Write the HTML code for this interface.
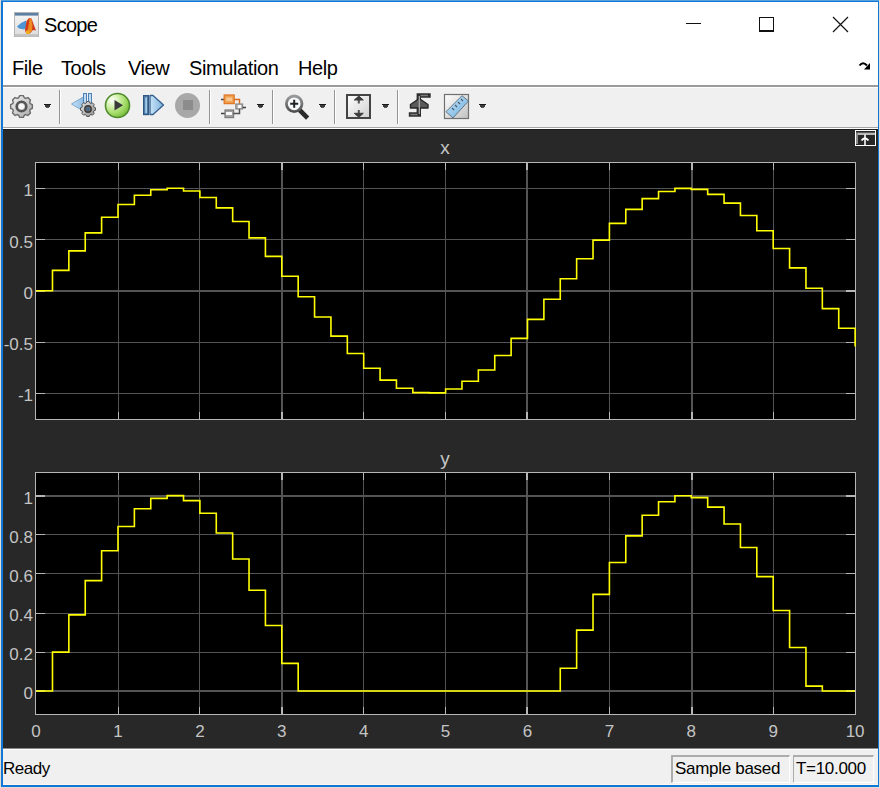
<!DOCTYPE html>
<html><head><meta charset="utf-8">
<style>
*{margin:0;padding:0;box-sizing:border-box}
html,body{width:880px;height:788px;overflow:hidden;background:#e4ddd6}
body{position:relative;font-family:"Liberation Sans",sans-serif}
.abs{position:absolute}
#win{position:absolute;left:1px;top:0;width:878px;height:787px;background:#0f78d6}
#topl{position:absolute;left:1px;top:0;width:878px;height:1px;background:#56a0df}
#title{position:absolute;left:3px;top:2px;width:875px;height:83px;background:#fff}
#sep1{position:absolute;left:3px;top:85px;width:875px;height:2px;background:#9b9b9b}
#tb{position:absolute;left:3px;top:87px;width:875px;height:40px;background:#f0f0f0;border-top:1px solid #fff}
#tbl{position:absolute;left:3px;top:127px;width:875px;height:1px;background:#a5a5a5}
#tbw{position:absolute;left:3px;top:128px;width:875px;height:1px;background:#fff}
#plot{position:absolute;left:3px;top:129px;width:875px;height:619px;background:#282828;border-top:1px solid #1c1c1c}
#sbl{position:absolute;left:3px;top:748px;width:875px;height:1px;background:#8a8a8a}
#sb{position:absolute;left:3px;top:749px;width:875px;height:35px;background:#f0f0f0;border-top:1px solid #fff}
#sbc{position:absolute;left:3px;top:784px;width:875px;height:1px;background:#fdf8f3}
.menu{position:absolute;top:56.5px;font-size:20px;color:#000;letter-spacing:-0.4px}
.yl{position:absolute;left:0;width:33px;text-align:right;font-size:17px;color:#c4c4c4;line-height:18px}
.xl{position:absolute;top:723px;width:40px;text-align:center;font-size:17px;color:#c4c4c4;line-height:18px}
.ttl{position:absolute;left:425px;width:40px;text-align:center;font-size:19px;color:#c4c4c4;line-height:20px}
.sbox{position:absolute;top:755px;height:28px;padding-top:1px;border-top:2px solid #acacac;border-left:2px solid #acacac;border-right:1px solid #fff;border-bottom:1px solid #fff;font-size:17px;line-height:22px;color:#000;padding-left:2px;white-space:nowrap;letter-spacing:-0.3px}
.sep{position:absolute;top:90px;width:1px;height:34px;background:#949494;box-shadow:1px 0 0 #fff}
.dd{position:absolute;top:104px;width:7px;height:4px}
</style></head><body>
<div id="win"></div>
<div id="topl"></div>
<div id="title"></div>
<div id="sep1"></div>
<div id="tb"></div>
<div id="tbl"></div>
<div id="tbw"></div>
<div id="plot"></div>
<div id="sbl"></div>
<div id="sb"></div>
<div id="sbc"></div>

<!-- title bar -->
<svg class="abs" style="left:14px;top:12px" width="26" height="26" viewBox="0 0 26 26">
<defs><linearGradient id="ig" x1="0" y1="0" x2="0" y2="1"><stop offset="0" stop-color="#f6f6f6"/><stop offset="1" stop-color="#dcdcdc"/></linearGradient></defs>
<rect x="0.5" y="0.5" width="24" height="24" fill="url(#ig)" stroke="#b4b4b4"/>
<rect x="1" y="1" width="23" height="2.6" fill="#5c80a4"/>
<rect x="1" y="22" width="23" height="2.5" fill="#c4c4c4"/>
<path d="M3,14.5 L7,11 L12,8.5 L13,15 L10,17.5 L5,16.5 Z" fill="#4d94d4"/>
<path d="M11,18 L12.5,9 L15,6 L17.5,6.5 L19.5,12 L21,16 L22,18.5 L19,18 L16.5,21 L13,22 L11.5,20 Z" fill="#cf3a1a"/>
<path d="M15.5,6.5 L17.5,7 L18.5,13 L18,19 L16,21 L13,21.5 L14.5,14 Z" fill="#ee8a20"/>
<path d="M12,18.5 L15.5,18.5 L15.5,22 L12,22 Z" fill="#f0b020"/>
</svg>
<div class="abs" style="left:44px;top:14px;font-size:20px;color:#000;letter-spacing:-0.7px">Scope</div>
<div class="abs" style="left:686px;top:23px;width:15px;height:1px;background:#111"></div>
<div class="abs" style="left:759px;top:17px;width:15px;height:15px;border:1px solid #111;border-bottom-width:2px"></div>
<svg class="abs" style="left:832px;top:16px" width="17" height="17" viewBox="0 0 17 17"><path d="M1,1 L16,16 M16,1 L1,16" stroke="#111" stroke-width="1.2"/></svg>

<!-- menu -->
<div class="menu" style="left:12px">File</div>
<div class="menu" style="left:61px">Tools</div>
<div class="menu" style="left:128px">View</div>
<div class="menu" style="left:189px">Simulation</div>
<div class="menu" style="left:298px">Help</div>
<svg class="abs" style="left:858px;top:61px" width="14" height="10" viewBox="0 0 14 10"><path d="M1.5,4.5 Q5,0 9,4.5" stroke="#000" stroke-width="2" fill="none"/><path d="M6,8.5 L12,8.5 L12,2 Z" fill="#000"/></svg>

<!-- toolbar -->
<div class="sep" style="left:59px"></div>
<div class="sep" style="left:209px"></div>
<div class="sep" style="left:272px"></div>
<div class="sep" style="left:334px"></div>
<div class="sep" style="left:397px"></div>
<svg class="dd" style="left:44px" width="7" height="4" viewBox="0 0 7 4"><rect x="0" y="0" width="7" height="1" fill="#1a1a1a"/><rect x="1" y="1" width="5" height="2" fill="#3a3a3a"/><rect x="2" y="3" width="3" height="1" fill="#555"/></svg>
<svg class="dd" style="left:257px" width="7" height="4" viewBox="0 0 7 4"><rect x="0" y="0" width="7" height="1" fill="#1a1a1a"/><rect x="1" y="1" width="5" height="2" fill="#3a3a3a"/><rect x="2" y="3" width="3" height="1" fill="#555"/></svg>
<svg class="dd" style="left:319px" width="7" height="4" viewBox="0 0 7 4"><rect x="0" y="0" width="7" height="1" fill="#1a1a1a"/><rect x="1" y="1" width="5" height="2" fill="#3a3a3a"/><rect x="2" y="3" width="3" height="1" fill="#555"/></svg>
<svg class="dd" style="left:382px" width="7" height="4" viewBox="0 0 7 4"><rect x="0" y="0" width="7" height="1" fill="#1a1a1a"/><rect x="1" y="1" width="5" height="2" fill="#3a3a3a"/><rect x="2" y="3" width="3" height="1" fill="#555"/></svg>
<svg class="dd" style="left:479px" width="7" height="4" viewBox="0 0 7 4"><rect x="0" y="0" width="7" height="1" fill="#1a1a1a"/><rect x="1" y="1" width="5" height="2" fill="#3a3a3a"/><rect x="2" y="3" width="3" height="1" fill="#555"/></svg>


<!-- gear -->
<svg class="abs" style="left:8px;top:93px" width="28" height="28" viewBox="0 0 28 28">
<defs><linearGradient id="gg" x1="0" y1="0" x2="1" y2="1"><stop offset="0" stop-color="#f4f4f4"/><stop offset="1" stop-color="#a8a8a8"/></linearGradient>
<linearGradient id="gg2" x1="0" y1="0" x2="1" y2="1"><stop offset="0" stop-color="#e8e8e8"/><stop offset="1" stop-color="#8a8a8a"/></linearGradient></defs>
<path d="M10.66,4.75 L11.69,2.65 L15.31,2.65 L16.34,4.75 L17.68,5.30 L19.90,4.55 L22.45,7.10 L21.70,9.32 L22.25,10.66 L24.35,11.69 L24.35,15.31 L22.25,16.34 L21.70,17.68 L22.45,19.90 L19.90,22.45 L17.68,21.70 L16.34,22.25 L15.31,24.35 L11.69,24.35 L10.66,22.25 L9.32,21.70 L7.10,22.45 L4.55,19.90 L5.30,17.68 L4.75,16.34 L2.65,15.31 L2.65,11.69 L4.75,10.66 L5.30,9.32 L4.55,7.10 L7.10,4.55 L9.32,5.30Z" fill="url(#gg)" stroke="#6a6a6a" stroke-width="1.4" stroke-linejoin="round"/>
<circle cx="13.5" cy="13.5" r="4.8" fill="none" stroke="#555" stroke-width="2.6"/>
<circle cx="13.5" cy="13.5" r="2.8" fill="#f8f8f8"/>
</svg>
<!-- step back -->
<svg class="abs" style="left:70px;top:92px" width="28" height="28" viewBox="0 0 28 28">
<defs><linearGradient id="tb1" x1="0" y1="0" x2="1" y2="0"><stop offset="0" stop-color="#c8e2f6"/><stop offset="1" stop-color="#8ab8e0"/></linearGradient></defs>
<path d="M1.5,12 L15,4 L15,20 Z" fill="url(#tb1)" stroke="#78a8d0" stroke-width="1"/>
<rect x="13.5" y="1.5" width="3" height="13" fill="#c0dcf2" stroke="#4f82b4" stroke-width="1"/>
<rect x="18.5" y="1.5" width="3" height="13" fill="#c0dcf2" stroke="#4f82b4" stroke-width="1"/>
<path d="M16.08,11.10 L16.75,9.50 L19.25,9.50 L19.92,11.10 L20.81,11.48 L22.42,10.82 L24.18,12.58 L23.52,14.19 L23.90,15.08 L25.50,15.75 L25.50,18.25 L23.90,18.92 L23.52,19.81 L24.18,21.42 L22.42,23.18 L20.81,22.52 L19.92,22.90 L19.25,24.50 L16.75,24.50 L16.08,22.90 L15.19,22.52 L13.58,23.18 L11.82,21.42 L12.48,19.81 L12.10,18.92 L10.50,18.25 L10.50,15.75 L12.10,15.08 L12.48,14.19 L11.82,12.58 L13.58,10.82 L15.19,11.48Z" fill="url(#gg2)" stroke="#555" stroke-width="1" stroke-linejoin="round"/>
<circle cx="18" cy="17" r="3.2" fill="#6a6a6a" stroke="#3a3a3a" stroke-width="1.4"/>
<circle cx="18" cy="17" r="1.5" fill="#3a6aa0"/>
</svg>
<!-- play -->
<svg class="abs" style="left:104px;top:92px" width="28" height="28" viewBox="0 0 28 28">
<defs><radialGradient id="pg" cx="0.28" cy="0.28" r="0.85"><stop offset="0" stop-color="#ffffff"/><stop offset="0.35" stop-color="#d0f0a8"/><stop offset="0.7" stop-color="#9cd860"/><stop offset="1" stop-color="#6cb030"/></radialGradient></defs>
<circle cx="13.5" cy="13.5" r="12" fill="url(#pg)" stroke="#4f8a2c" stroke-width="1.6"/>
<path d="M10.5,8 L10.5,18.5 L19,13.3 Z" fill="#3a3a3a"/>
</svg>
<!-- step fwd -->
<svg class="abs" style="left:141px;top:92px" width="26" height="26" viewBox="0 0 26 26">
<defs><linearGradient id="bg1" x1="0" y1="0" x2="1" y2="0"><stop offset="0" stop-color="#c8e4f8"/><stop offset="1" stop-color="#7eb0da"/></linearGradient></defs>
<rect x="2.6" y="3.6" width="4.8" height="19" fill="#5582b0" stroke="#2f5580" stroke-width="1.2"/>
<rect x="4.4" y="5.5" width="1.4" height="15.5" fill="#b8dcf4"/>
<path d="M9,3.5 L12,3.5 L22.5,13 L12,22.5 L9,22.5 Z" fill="url(#bg1)" stroke="#35608e" stroke-width="1.3" stroke-linejoin="round"/>
</svg>
<!-- stop -->
<svg class="abs" style="left:174px;top:92px" width="28" height="28" viewBox="0 0 28 28">
<circle cx="13.5" cy="13.5" r="12.5" fill="#a8a8a8"/>
<rect x="9" y="8" width="10" height="10" fill="#8c8c8c"/>
</svg>
<!-- signal select -->
<svg class="abs" style="left:219px;top:92px" width="30" height="28" viewBox="0 0 30 28">
<path d="M2,7.5 L5,7.5" stroke="#404040" stroke-width="1.5"/>
<rect x="5.2" y="3" width="10" height="8.6" fill="#f0a050" stroke="#e07828" stroke-width="1.3"/>
<rect x="7.2" y="5.5" width="6" height="3.5" fill="#f8c890"/>
<path d="M15.2,7.5 L20.5,7.5 L20.5,12" stroke="#d86a20" stroke-width="1.5" fill="none"/>
<rect x="16.8" y="12" width="6.8" height="5" fill="#b0b0b0" stroke="#8a8a8a" stroke-width="1.2"/>
<rect x="18.9" y="13" width="3.3" height="3" fill="#fafafa"/>
<path d="M23.6,15.5 L27,15.5" stroke="#404040" stroke-width="1.5"/>
<path d="M2,21.5 L6,21.5" stroke="#404040" stroke-width="1.5"/>
<rect x="6" y="18" width="8.6" height="7.6" fill="#a0a0a0" stroke="#7a7a7a" stroke-width="1.2"/>
<rect x="7" y="20" width="6" height="3" fill="#fafafa"/>
<path d="M14.6,21.5 L20.5,21.5 L20.5,17" stroke="#505050" stroke-width="1.5" fill="none"/>
</svg>
<!-- zoom -->
<svg class="abs" style="left:282px;top:93px" width="28" height="27" viewBox="0 0 28 27">
<defs><linearGradient id="zg" x1="0" y1="0" x2="0" y2="1"><stop offset="0" stop-color="#9a9a9a"/><stop offset="1" stop-color="#505050"/></linearGradient></defs>
<path d="M18,17.5 L24,23.5" stroke="#2a2a2a" stroke-width="4.6" stroke-linecap="square"/>
<circle cx="12.2" cy="10.8" r="7.8" fill="#f6f9fc" stroke="url(#zg)" stroke-width="2.8"/>
<path d="M8.2,10.8 L16.2,10.8 M12.2,6.8 L12.2,14.8" stroke="#222" stroke-width="2"/>
</svg>
<!-- scale -->
<svg class="abs" style="left:345px;top:93px" width="28" height="28" viewBox="0 0 28 28">
<defs><linearGradient id="sg" x1="0" y1="0" x2="1" y2="1"><stop offset="0" stop-color="#ffffff"/><stop offset="1" stop-color="#cfcfcf"/></linearGradient></defs>
<rect x="2" y="2" width="23" height="23" fill="url(#sg)" stroke="#444" stroke-width="2"/>
<path d="M13.8,5 L13.8,10.5 M13.8,17 L13.8,22" stroke="#505050" stroke-width="2"/>
<path d="M9.3,7 L13.8,3 L18.3,7 Z M9.3,20.3 L13.8,24.3 L18.3,20.3 Z" fill="#3c3c3c" stroke="#3c3c3c" stroke-width="1" stroke-linejoin="round"/>
</svg>
<!-- triggers -->
<svg class="abs" style="left:407px;top:92px" width="26" height="28" viewBox="0 0 26 28">
<path d="M4,22.5 L11.8,22.5 L11.8,3.5 L21.5,3.5" stroke="#2e2e2e" stroke-width="4.4" fill="none" stroke-linecap="square"/>
<path d="M3.5,22.5 L10.5,22.5 M13.5,3.5 L21,3.5" stroke="#7a7a7a" stroke-width="1.4" fill="none"/>
<path d="M3.5,16 L3.5,12.5 L12.2,6.5 L21,12.5 L21,16 Z" fill="#5a5a5a" stroke="#262626" stroke-width="1.4" stroke-linejoin="round"/>
<path d="M12.3,4 L12.3,22" stroke="#b0b0b0" stroke-width="1.2"/>
</svg>
<!-- measure -->
<svg class="abs" style="left:443px;top:93px" width="28" height="28" viewBox="0 0 28 28">
<defs><linearGradient id="mg" x1="0" y1="0" x2="1" y2="1"><stop offset="0" stop-color="#ffffff"/><stop offset="1" stop-color="#c0c0c0"/></linearGradient>
<linearGradient id="mb" x1="0" y1="0" x2="1" y2="1"><stop offset="0" stop-color="#c8e4f8"/><stop offset="1" stop-color="#6aaede"/></linearGradient></defs>
<rect x="1.5" y="1.5" width="24" height="24" fill="url(#mg)" stroke="#707070" stroke-width="1.2"/>
<path d="M3,18.7 L19,2.7 L25.5,8 L10,25 Z" fill="url(#mb)" stroke="#5a6a78" stroke-width="0.9"/>
<path d="M9,15 L11,17 M12,12 L14,14 M15,9 L17,11 M18,6 L20,8" stroke="#4a5a68" stroke-width="1.1"/>
</svg>

<!-- plot area -->
<svg class="abs" style="left:0;top:0" width="880" height="788" viewBox="0 0 880 788">
<rect x="35" y="162" width="821" height="258" fill="#000"/>
<rect x="118" y="163" width="1" height="256" fill="#545454"/>
<rect x="199" y="163" width="1" height="256" fill="#545454"/>
<rect x="281" y="163" width="2" height="256" fill="#545454"/>
<rect x="363" y="163" width="1" height="256" fill="#545454"/>
<rect x="445" y="163" width="1" height="256" fill="#545454"/>
<rect x="526" y="163" width="2" height="256" fill="#545454"/>
<rect x="609" y="163" width="1" height="256" fill="#545454"/>
<rect x="691" y="163" width="2" height="256" fill="#545454"/>
<rect x="773" y="163" width="1" height="256" fill="#545454"/>
<rect x="36" y="188" width="819" height="1" fill="#545454"/>
<rect x="36" y="239" width="819" height="1" fill="#545454"/>
<rect x="36" y="290" width="819" height="2" fill="#545454"/>
<rect x="36" y="342" width="819" height="1" fill="#545454"/>
<rect x="36" y="393" width="819" height="1" fill="#545454"/>
<rect x="118" y="412" width="1" height="7" fill="#b6b6b6"/>
<rect x="118" y="163" width="1" height="7" fill="#b6b6b6"/>
<rect x="199" y="412" width="1" height="7" fill="#b6b6b6"/>
<rect x="199" y="163" width="1" height="7" fill="#b6b6b6"/>
<rect x="281" y="412" width="2" height="7" fill="#b6b6b6"/>
<rect x="281" y="163" width="2" height="7" fill="#b6b6b6"/>
<rect x="363" y="412" width="1" height="7" fill="#b6b6b6"/>
<rect x="363" y="163" width="1" height="7" fill="#b6b6b6"/>
<rect x="445" y="412" width="1" height="7" fill="#b6b6b6"/>
<rect x="445" y="163" width="1" height="7" fill="#b6b6b6"/>
<rect x="526" y="412" width="2" height="7" fill="#b6b6b6"/>
<rect x="526" y="163" width="2" height="7" fill="#b6b6b6"/>
<rect x="609" y="412" width="1" height="7" fill="#b6b6b6"/>
<rect x="609" y="163" width="1" height="7" fill="#b6b6b6"/>
<rect x="691" y="412" width="2" height="7" fill="#b6b6b6"/>
<rect x="691" y="163" width="2" height="7" fill="#b6b6b6"/>
<rect x="773" y="412" width="1" height="7" fill="#b6b6b6"/>
<rect x="773" y="163" width="1" height="7" fill="#b6b6b6"/>
<rect x="36" y="188" width="9" height="1" fill="#b6b6b6"/>
<rect x="846" y="188" width="9" height="1" fill="#b6b6b6"/>
<rect x="36" y="239" width="9" height="1" fill="#b6b6b6"/>
<rect x="846" y="239" width="9" height="1" fill="#b6b6b6"/>
<rect x="36" y="290" width="9" height="2" fill="#b6b6b6"/>
<rect x="846" y="290" width="9" height="2" fill="#b6b6b6"/>
<rect x="36" y="342" width="9" height="1" fill="#b6b6b6"/>
<rect x="846" y="342" width="9" height="1" fill="#b6b6b6"/>
<rect x="36" y="393" width="9" height="1" fill="#b6b6b6"/>
<rect x="846" y="393" width="9" height="1" fill="#b6b6b6"/>
<rect x="35.5" y="162.5" width="820" height="257" fill="none" stroke="#b6b6b6" stroke-width="1"/>
<rect x="35" y="472" width="821" height="243" fill="#000"/>
<rect x="118" y="473" width="1" height="241" fill="#545454"/>
<rect x="199" y="473" width="1" height="241" fill="#545454"/>
<rect x="281" y="473" width="2" height="241" fill="#545454"/>
<rect x="363" y="473" width="1" height="241" fill="#545454"/>
<rect x="445" y="473" width="1" height="241" fill="#545454"/>
<rect x="526" y="473" width="2" height="241" fill="#545454"/>
<rect x="609" y="473" width="1" height="241" fill="#545454"/>
<rect x="691" y="473" width="2" height="241" fill="#545454"/>
<rect x="773" y="473" width="1" height="241" fill="#545454"/>
<rect x="36" y="495" width="819" height="2" fill="#545454"/>
<rect x="36" y="534" width="819" height="1" fill="#545454"/>
<rect x="36" y="573" width="819" height="1" fill="#545454"/>
<rect x="36" y="613" width="819" height="1" fill="#545454"/>
<rect x="36" y="652" width="819" height="1" fill="#545454"/>
<rect x="36" y="690" width="819" height="2" fill="#545454"/>
<rect x="118" y="707" width="1" height="7" fill="#b6b6b6"/>
<rect x="118" y="473" width="1" height="7" fill="#b6b6b6"/>
<rect x="199" y="707" width="1" height="7" fill="#b6b6b6"/>
<rect x="199" y="473" width="1" height="7" fill="#b6b6b6"/>
<rect x="281" y="707" width="2" height="7" fill="#b6b6b6"/>
<rect x="281" y="473" width="2" height="7" fill="#b6b6b6"/>
<rect x="363" y="707" width="1" height="7" fill="#b6b6b6"/>
<rect x="363" y="473" width="1" height="7" fill="#b6b6b6"/>
<rect x="445" y="707" width="1" height="7" fill="#b6b6b6"/>
<rect x="445" y="473" width="1" height="7" fill="#b6b6b6"/>
<rect x="526" y="707" width="2" height="7" fill="#b6b6b6"/>
<rect x="526" y="473" width="2" height="7" fill="#b6b6b6"/>
<rect x="609" y="707" width="1" height="7" fill="#b6b6b6"/>
<rect x="609" y="473" width="1" height="7" fill="#b6b6b6"/>
<rect x="691" y="707" width="2" height="7" fill="#b6b6b6"/>
<rect x="691" y="473" width="2" height="7" fill="#b6b6b6"/>
<rect x="773" y="707" width="1" height="7" fill="#b6b6b6"/>
<rect x="773" y="473" width="1" height="7" fill="#b6b6b6"/>
<rect x="36" y="495" width="9" height="2" fill="#b6b6b6"/>
<rect x="846" y="495" width="9" height="2" fill="#b6b6b6"/>
<rect x="36" y="534" width="9" height="1" fill="#b6b6b6"/>
<rect x="846" y="534" width="9" height="1" fill="#b6b6b6"/>
<rect x="36" y="573" width="9" height="1" fill="#b6b6b6"/>
<rect x="846" y="573" width="9" height="1" fill="#b6b6b6"/>
<rect x="36" y="613" width="9" height="1" fill="#b6b6b6"/>
<rect x="846" y="613" width="9" height="1" fill="#b6b6b6"/>
<rect x="36" y="652" width="9" height="1" fill="#b6b6b6"/>
<rect x="846" y="652" width="9" height="1" fill="#b6b6b6"/>
<rect x="36" y="690" width="9" height="2" fill="#b6b6b6"/>
<rect x="846" y="690" width="9" height="2" fill="#b6b6b6"/>
<rect x="35.5" y="472.5" width="820" height="242" fill="none" stroke="#b6b6b6" stroke-width="1"/>
<path d="M36.10,290.75 L52.48,290.75 L52.48,270.39 L68.86,270.39 L68.86,250.83 L85.24,250.83 L85.24,232.87 L101.62,232.87 L101.62,217.22 L118.00,217.22 L118.00,204.50 L134.38,204.50 L134.38,195.22 L150.76,195.22 L150.76,189.74 L167.14,189.74 L167.14,188.29 L183.52,188.29 L183.52,190.93 L199.90,190.93 L199.90,197.55 L216.28,197.55 L216.28,207.88 L232.66,207.88 L232.66,221.52 L249.04,221.52 L249.04,237.91 L265.42,237.91 L265.42,256.41 L281.80,256.41 L281.80,276.29 L298.18,276.29 L298.18,296.73 L314.56,296.73 L314.56,316.94 L330.94,316.94 L330.94,336.11 L347.32,336.11 L347.32,353.47 L363.70,353.47 L363.70,368.32 L380.08,368.32 L380.08,380.09 L396.46,380.09 L396.46,388.29 L412.84,388.29 L412.84,392.60 L429.22,392.60 L429.22,392.86 L445.60,392.86 L445.60,389.04 L461.98,389.04 L461.98,381.30 L478.36,381.30 L478.36,369.96 L494.74,369.96 L494.74,355.45 L511.12,355.45 L511.12,338.37 L527.50,338.37 L527.50,319.39 L543.88,319.39 L543.88,299.27 L560.26,299.27 L560.26,278.80 L576.64,278.80 L576.64,258.82 L593.02,258.82 L593.02,240.10 L609.40,240.10 L609.40,223.41 L625.78,223.41 L625.78,209.40 L642.16,209.40 L642.16,198.63 L658.54,198.63 L658.54,191.54 L674.92,191.54 L674.92,188.40 L691.30,188.40 L691.30,189.34 L707.68,189.34 L707.68,194.33 L724.06,194.33 L724.06,203.15 L740.44,203.15 L740.44,215.47 L756.82,215.47 L756.82,230.80 L773.20,230.80 L773.20,248.51 L789.58,248.51 L789.58,267.90 L805.96,267.90 L805.96,288.21 L822.34,288.21 L822.34,308.62 L838.72,308.62 L838.72,328.31 L855.10,328.31 L855.10,346.51" fill="none" stroke="#ffff00" stroke-width="1.6" stroke-linejoin="miter"/>
<path d="M36.10,691.00 L52.48,691.00 L52.48,652.16 L68.86,652.16 L68.86,614.87 L85.24,614.87 L85.24,580.61 L101.62,580.61 L101.62,550.76 L118.00,550.76 L118.00,526.49 L134.38,526.49 L134.38,508.79 L150.76,508.79 L150.76,498.34 L167.14,498.34 L167.14,495.58 L183.52,495.58 L183.52,500.61 L199.90,500.61 L199.90,513.23 L216.28,513.23 L216.28,532.94 L232.66,532.94 L232.66,558.95 L249.04,558.95 L249.04,590.22 L265.42,590.22 L265.42,625.51 L281.80,625.51 L281.80,663.41 L298.18,663.41 L298.18,691.00 L314.56,691.00 L314.56,691.00 L330.94,691.00 L330.94,691.00 L347.32,691.00 L347.32,691.00 L363.70,691.00 L363.70,691.00 L380.08,691.00 L380.08,691.00 L396.46,691.00 L396.46,691.00 L412.84,691.00 L412.84,691.00 L429.22,691.00 L429.22,691.00 L445.60,691.00 L445.60,691.00 L461.98,691.00 L461.98,691.00 L478.36,691.00 L478.36,691.00 L494.74,691.00 L494.74,691.00 L511.12,691.00 L511.12,691.00 L527.50,691.00 L527.50,691.00 L543.88,691.00 L543.88,691.00 L560.26,691.00 L560.26,668.21 L576.64,668.21 L576.64,630.09 L593.02,630.09 L593.02,594.40 L609.40,594.40 L609.40,562.56 L625.78,562.56 L625.78,535.84 L642.16,535.84 L642.16,515.30 L658.54,515.30 L658.54,501.77 L674.92,501.77 L674.92,495.78 L691.30,495.78 L691.30,497.58 L707.68,497.58 L707.68,507.09 L724.06,507.09 L724.06,523.93 L740.44,523.93 L740.44,547.43 L756.82,547.43 L756.82,576.65 L773.20,576.65 L773.20,610.43 L789.58,610.43 L789.58,647.43 L805.96,647.43 L805.96,686.16 L822.34,686.16 L822.34,691.00 L838.72,691.00 L838.72,691.00 L855.10,691.00 L855.10,691.00" fill="none" stroke="#ffff00" stroke-width="1.6" stroke-linejoin="miter"/>
</svg>
<div class="ttl" style="top:138px">x</div>
<div class="ttl" style="top:449px">y</div>
<div class="yl" style="top:182.2px">1</div>
<div class="yl" style="top:233.5px">0.5</div>
<div class="yl" style="top:284.8px">0</div>
<div class="yl" style="top:336.0px">-0.5</div>
<div class="yl" style="top:387.2px">-1</div>
<div class="yl" style="top:489.5px">1</div>
<div class="yl" style="top:528.6px">0.8</div>
<div class="yl" style="top:567.7px">0.6</div>
<div class="yl" style="top:606.8px">0.4</div>
<div class="yl" style="top:645.9px">0.2</div>
<div class="yl" style="top:685.0px">0</div>
<div class="xl" style="left:16.1px">0</div>
<div class="xl" style="left:98.0px">1</div>
<div class="xl" style="left:179.9px">2</div>
<div class="xl" style="left:261.8px">3</div>
<div class="xl" style="left:343.7px">4</div>
<div class="xl" style="left:425.6px">5</div>
<div class="xl" style="left:507.5px">6</div>
<div class="xl" style="left:589.4px">7</div>
<div class="xl" style="left:671.3px">8</div>
<div class="xl" style="left:753.2px">9</div>
<div class="xl" style="left:835.1px">10</div>

<!-- undock icon -->
<svg class="abs" style="left:855px;top:130px" width="21" height="16" viewBox="0 0 21 16">
<rect x="0.5" y="0.5" width="20" height="15" fill="#262626" stroke="#fff"/>
<rect x="1" y="2" width="19" height="1" fill="#5a5a5a"/>
<rect x="1" y="3" width="19" height="2" fill="#b8b8b8"/>
<rect x="1" y="3" width="2" height="11" fill="#8a8a8a"/>
<rect x="9" y="4" width="2" height="11" fill="#d0d0d0"/>
<path d="M6.5,10.5 Q10,6 13.5,10.5" stroke="#fff" stroke-width="2" fill="none"/>
</svg>

<!-- status -->
<div class="abs" style="left:3px;top:759px;font-size:17px;color:#000;letter-spacing:-0.5px">Ready</div>
<div class="sbox" style="left:671px;width:119px">Sample based</div>
<div class="sbox" style="left:793px;width:81px;border-left-width:1px;padding-left:2px">T=10.000</div>
</body></html>
